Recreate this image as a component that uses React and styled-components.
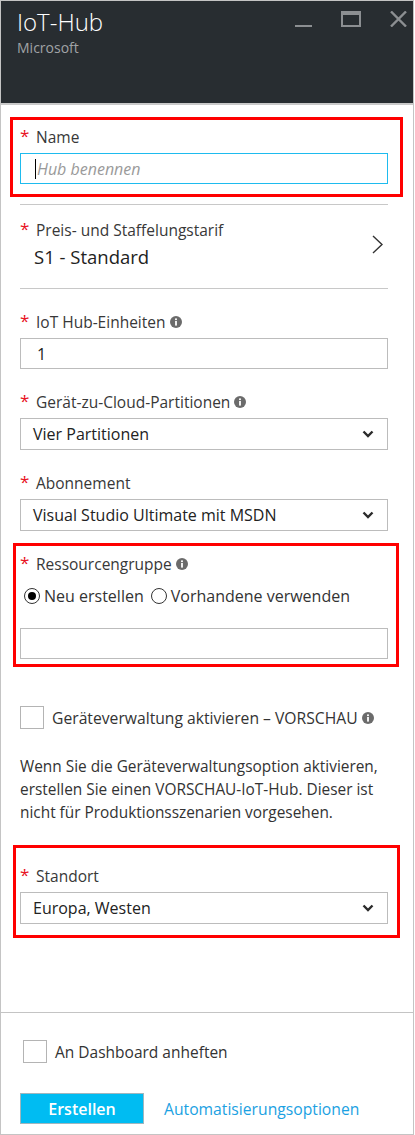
import styled, { createGlobalStyle } from 'styled-components';

const GlobalStyle = createGlobalStyle`
  html, body {
    margin: 0;
    padding: 0;
    background: #ffffff;
  }
  body {
    font-family: 'Open Sans', 'Noto Sans', sans-serif;
    color: #333;
  }
  * {
    box-sizing: border-box;
  }
`;

const InfoIcon = () => (
  <InfoSvg viewBox="0 0 12 12" width="12" height="12">
    <circle cx="6" cy="6" r="6" fill="#6b6b6b" />
    <rect x="5.1" y="5" width="1.8" height="4.6" fill="#fff" />
    <circle cx="6" cy="3.2" r="1.05" fill="#fff" />
  </InfoSvg>
);

const Chevron = () => (
  <svg width="12" height="8" viewBox="0 0 12 8">
    <path d="M1.5 1.5 L6 6 L10.5 1.5" fill="none" stroke="#2b2b2b" strokeWidth="2.4" />
  </svg>
);

const RequiredLabel = ({ children, info }) => (
  <Label>
    <Star>*</Star>
    <span>{children}</span>
    {info && <InfoIcon />}
  </Label>
);

const SelectBox = ({ value }) => (
  <Select>
    <span>{value}</span>
    <Chevron />
  </Select>
);

const App = () => {
  return (
    <>
      <GlobalStyle />
      <Panel>
        <Header>
          <TitleBlock>
            <Title>IoT-Hub</Title>
            <Subtitle>Microsoft</Subtitle>
          </TitleBlock>
          <WindowControls>
            <svg width="17" height="16" viewBox="0 0 17 16">
              <rect x="0" y="14" width="17" height="2" fill="#8c8f92" />
            </svg>
            <svg width="20" height="16" viewBox="0 0 20 16">
              <path d="M0 0 H20 V16 H0 Z M2 4 V14 H18 V4 Z" fill="#8c8f92" fillRule="evenodd" />
            </svg>
            <svg width="17" height="16" viewBox="0 0 17 16">
              <path d="M1 0.5 L16 15.5 M16 0.5 L1 15.5" stroke="#8c8f92" strokeWidth="2.4" />
            </svg>
          </WindowControls>
        </Header>

        <Content>
          <Highlight $top={12} $left={10} $right={15} $pt={7} $pb={10}>
            <RequiredLabel>Name</RequiredLabel>
            <TextInput $focused>
              <Caret />
              <Placeholder>Hub benennen</Placeholder>
            </TextInput>
          </Highlight>

          <Divider $top={7} />
          <TierRow>
            <div>
              <RequiredLabel>Preis- und Staffelungstarif</RequiredLabel>
              <TierValue>S1 - Standard</TierValue>
            </div>
            <svg width="11" height="19" viewBox="0 0 11 19">
              <path d="M1 1 L10 9.5 L1 18" fill="none" stroke="#333" strokeWidth="1.4" />
            </svg>
          </TierRow>
          <Divider />

          <Field>
            <RequiredLabel info>IoT Hub-Einheiten</RequiredLabel>
            <TextInput>
              <Value>1</Value>
            </TextInput>
          </Field>
          <Field>
            <RequiredLabel info>Gerät-zu-Cloud-Partitionen</RequiredLabel>
            <SelectBox value="Vier Partitionen" />
          </Field>
          <Field>
            <RequiredLabel>Abonnement</RequiredLabel>
            <SelectBox value="Visual Studio Ultimate mit MSDN" />
          </Field>

          <Highlight $top={12} $left={7} $right={11} $pt={8} $pb={5}>
            <RequiredLabel info>Ressourcengruppe</RequiredLabel>
            <RadioRow>
              <RadioOption>
                <Radio $checked />
                Neu erstellen
              </RadioOption>
              <RadioOption>
                <Radio />
                Vorhandene verwenden
              </RadioOption>
            </RadioRow>
            <TextInput $top={22} />
          </Highlight>

          <CheckRow $top={39} $size={15.7}>
            <Checkbox />
            <CheckLabel>Geräteverwaltung aktivieren – VORSCHAU</CheckLabel>
            <InfoIcon />
          </CheckRow>

          <Note>
            Wenn Sie die Geräteverwaltungsoption aktivieren, erstellen Sie einen VORSCHAU-IoT-Hub. Dieser ist
            nicht für Produktionsszenarien vorgesehen.
          </Note>

          <Highlight $top={21} $left={7} $right={12} $pt={18} $pb={11}>
            <RequiredLabel>Standort</RequiredLabel>
            <SelectBox value="Europa, Westen" />
          </Highlight>
        </Content>

        <Footer>
          <CheckRow $top={27} $indent={3} $size={15.5}>
            <Checkbox />
            <CheckLabel>An Dashboard anheften</CheckLabel>
          </CheckRow>
          <Actions>
            <PrimaryButton>Erstellen</PrimaryButton>
            <TextLink>Automatisierungsoptionen</TextLink>
          </Actions>
        </Footer>
      </Panel>
    </>
  );
};

const Panel = styled.div`
  width: 414px;
  height: 1135px;
  border: 1px solid #c4c4c4;
  display: flex;
  flex-direction: column;
  background: #fff;
`;

const Header = styled.header`
  height: 104px;
  flex-shrink: 0;
  background: #282d31;
  border-bottom: 2px solid #c9c9c9;
  display: flex;
  justify-content: space-between;
  padding: 0 6px 0 16px;
`;

const TitleBlock = styled.div`
  padding-top: 5px;
`;

const Title = styled.div`
  color: #ffffff;
  font-size: 24px;
  font-weight: 300;
  line-height: 32px;
`;

const Subtitle = styled.div`
  color: #a0a3a6;
  font-size: 14px;
  line-height: 18px;
  margin-top: 1px;
`;

const WindowControls = styled.div`
  display: flex;
  align-items: flex-start;
  gap: 29px;
  margin-top: 10px;
`;

const Content = styled.main`
  flex: 1;
  padding: 0 25px 0 19px;
`;

const Highlight = styled.section`
  margin: ${(p) => p.$top}px -${(p) => p.$right}px 0 -${(p) => p.$left}px;
  padding: ${(p) => p.$pt}px ${(p) => p.$right - 3}px ${(p) => p.$pb}px ${(p) => p.$left - 3}px;
  border: 3px solid #ff0000;
`;

const Label = styled.div`
  display: flex;
  align-items: center;
  height: 20px;
  font-size: 15.5px;
  color: #383838;
  white-space: nowrap;
`;

const Star = styled.span`
  color: #e81123;
  font-size: 17px;
  width: 16px;
  align-self: flex-start;
  line-height: 18px;
`;

const InfoSvg = styled.svg`
  margin-left: 4px;
  flex-shrink: 0;
`;

const TextInput = styled.div`
  margin-top: ${(p) => (p.$top != null ? p.$top : 6)}px;
  height: 31px;
  border: 1px solid ${(p) => (p.$focused ? '#1ebbee' : '#bcbcbc')};
  display: flex;
  align-items: center;
  padding-left: 14px;
  font-size: 16px;
`;

const Caret = styled.span`
  width: 1px;
  height: 20px;
  background: #000;
  margin-right: 1px;
`;

const Placeholder = styled.span`
  color: #9a9a9a;
  font-style: italic;
`;

const Value = styled.span`
  color: #222;
  padding-left: 2px;
`;

const Select = styled.div`
  margin-top: 6px;
  height: 32px;
  border: 1px solid #bcbcbc;
  display: flex;
  align-items: center;
  justify-content: space-between;
  padding: 0 13px 0 12px;
  font-size: 16px;
  color: #222;
`;

const Divider = styled.hr`
  margin: ${(p) => p.$top || 0}px 0 0;
  border: none;
  height: 1px;
  background: #c8c8c8;
`;

const TierRow = styled.div`
  display: flex;
  align-items: center;
  justify-content: space-between;
  padding: 15px 5px 19px 0;
`;

const TierValue = styled.div`
  margin-top: 5px;
  padding-left: 14px;
  font-size: 18.5px;
  line-height: 24px;
  color: #222;
`;

const Field = styled.div`
  margin-top: 23px;
`;

const RadioRow = styled.div`
  display: flex;
  align-items: center;
  gap: 7px;
  margin-top: 12px;
  height: 20px;
  padding-left: 4px;
`;

const RadioOption = styled.label`
  display: flex;
  align-items: center;
  gap: 4px;
  font-size: 16px;
  color: #333;
  white-space: nowrap;
`;

const Radio = styled.span`
  width: 16px;
  height: 16px;
  border-radius: 50%;
  border: 1px solid #333;
  display: inline-flex;
  align-items: center;
  justify-content: center;
  flex-shrink: 0;

  &::after {
    content: '';
    width: 8px;
    height: 8px;
    border-radius: 50%;
    background: ${(p) => (p.$checked ? '#000' : 'transparent')};
  }
`;

const CheckRow = styled.div`
  display: flex;
  align-items: center;
  margin-top: ${(p) => p.$top}px;
  margin-left: ${(p) => p.$indent || 0}px;
  font-size: ${(p) => p.$size || 16}px;
`;

const Checkbox = styled.span`
  width: 24px;
  height: 23px;
  border: 1px solid #b4b4b4;
  background: #fff;
  flex-shrink: 0;
  margin-right: 8px;
`;

const CheckLabel = styled.span`
  color: #333;
  white-space: nowrap;
`;

const Note = styled.p`
  margin: 26px 0 0;
  font-size: 15.4px;
  line-height: 23px;
  color: #333;
`;

const Footer = styled.footer`
  height: 122px;
  flex-shrink: 0;
  border-top: 1px solid #c4c4c4;
  padding: 0 19px;
`;

const Actions = styled.div`
  display: flex;
  align-items: center;
  gap: 20px;
  margin-top: 30px;
`;

const PrimaryButton = styled.button`
  width: 124px;
  height: 31px;
  background: #00bcf2;
  border: 1px solid #9fb6be;
  color: #fff;
  font-family: inherit;
  font-size: 16px;
  font-weight: 600;
  cursor: pointer;
`;

const TextLink = styled.a`
  color: #1ba1e2;
  font-size: 15.7px;
  cursor: pointer;
`;

export default App;
